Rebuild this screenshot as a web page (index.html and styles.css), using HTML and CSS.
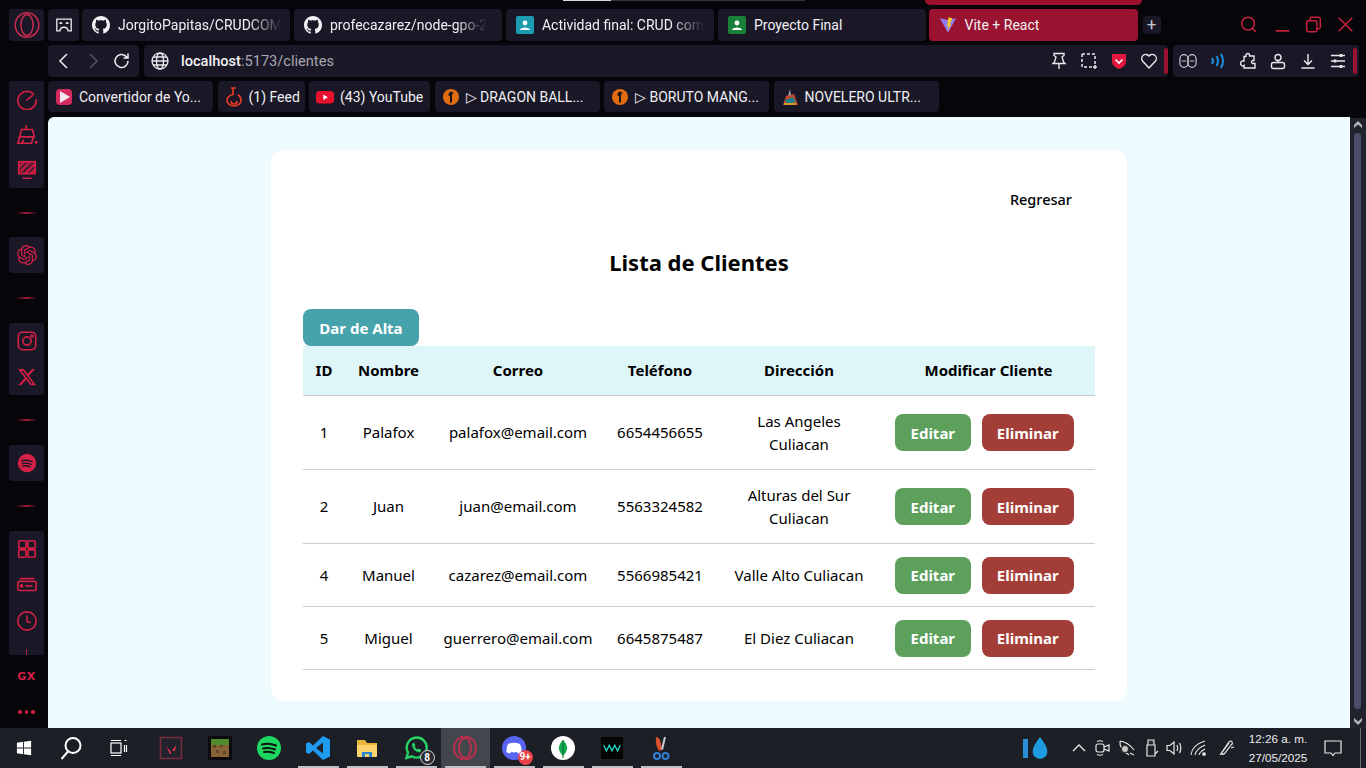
FILE: index.html
```html
<!DOCTYPE html>
<html lang="es">
<head>
<meta charset="utf-8">
<title>Vite + React</title>
<link rel="stylesheet" href="styles.css">
</head>
<body>
<div class="screen">
  <div class="browser">
    <span class="stripe-white"></span>
    <span class="stripe-dark"></span>
    <span class="stripe-red"></span>
    <aside class="sidebar">
      <div class="logo-btn">
        <svg class="i26" viewBox="0 0 32 32" fill="none" stroke="#c92a50" stroke-width="1.800"><ellipse cx="16" cy="16" rx="14.500" ry="15"/><ellipse cx="16" cy="16" rx="7.500" ry="13"/></svg>
      </div>
      <div class="side-group first">
        <div class="side-slot"><svg class="i22" viewBox="0 0 24 24" fill="none" stroke="#d41f47" stroke-width="1.800" stroke-linecap="round"><path d="M19 6.500A10 10 0 1 0 22 13"/><path d="M12 13l6-5"/></svg></div>
        <div class="side-slot"><svg class="i22" viewBox="0 0 24 24" fill="none" stroke="#d41f47" stroke-width="1.800"><path d="M11 1v5M6 6h12l2 8H4z"/><path d="M4 14l-2 7h15l2-7M7 21l1-4"/><circle cx="22" cy="20" r="1.600" fill="#d41f47" stroke="none"/></svg></div>
        <div class="side-slot"><svg class="i22" viewBox="0 0 24 24" fill="none" stroke="#d41f47" stroke-width="1.800"><rect x="3" y="3" width="18" height="13" fill="#d41f47" fill-opacity=".35"/><path d="M5 14L15 3M10 16L21 5M3 9l6-6M16 16l5-5M7 21h10"/></svg></div>
      </div>
      <span class="side-sep"></span>
      <div class="side-group">
        <div class="side-slot"><svg class="i20" viewBox="0 0 24 24"><path fill="#d41f47" d="M22.2819 9.8211a5.9847 5.9847 0 0 0-.5157-4.9108 6.0462 6.0462 0 0 0-6.5098-2.9A6.0651 6.0651 0 0 0 4.9807 4.1818a5.9847 5.9847 0 0 0-3.9977 2.9 6.0462 6.0462 0 0 0 .7427 7.0966 5.98 5.98 0 0 0 .511 4.9107 6.051 6.051 0 0 0 6.5146 2.9001A5.9847 5.9847 0 0 0 13.2599 24a6.0557 6.0557 0 0 0 5.7718-4.2058 5.9894 5.9894 0 0 0 3.9977-2.9001 6.0557 6.0557 0 0 0-.7475-7.0729zm-9.022 12.6081a4.4755 4.4755 0 0 1-2.8764-1.0408l.1419-.0804 4.7783-2.7582a.7948.7948 0 0 0 .3927-.6813v-6.7369l2.02 1.1686a.071.071 0 0 1 .038.052v5.5826a4.504 4.504 0 0 1-4.4945 4.4944zm-9.6607-4.1254a4.4708 4.4708 0 0 1-.5346-3.0137l.142.0852 4.783 2.7582a.7712.7712 0 0 0 .7806 0l5.8428-3.3685v2.3324a.0804.0804 0 0 1-.0332.0615L9.74 19.9502a4.4992 4.4992 0 0 1-6.1408-1.6464zM2.3408 7.8956a4.485 4.485 0 0 1 2.3655-1.9728V11.6a.7664.7664 0 0 0 .3879.6765l5.8144 3.3543-2.0201 1.1685a.0757.0757 0 0 1-.071 0l-4.8303-2.7865A4.504 4.504 0 0 1 2.3408 7.872zm16.5963 3.8558L13.1038 8.364 15.1192 7.2a.0757.0757 0 0 1 .071 0l4.8303 2.7913a4.4944 4.4944 0 0 1-.6765 8.1042v-5.6772a.79.79 0 0 0-.407-.667zm2.0107-3.0231l-.142-.0852-4.7735-2.7818a.7759.7759 0 0 0-.7854 0L9.409 9.2297V6.8974a.0662.0662 0 0 1 .0284-.0615l4.8303-2.7866a4.4992 4.4992 0 0 1 6.6802 4.66zM8.3065 12.863l-2.02-1.1638a.0804.0804 0 0 1-.038-.0567V6.0742a4.4992 4.4992 0 0 1 7.3757-3.4537l-.142.0805L8.704 5.459a.7948.7948 0 0 0-.3927.6813zm1.0976-2.3654l2.602-1.4998 2.6069 1.4998v2.9994l-2.5974 1.4997-2.6067-1.4997Z"/></svg></div>
      </div>
      <span class="side-sep"></span>
      <div class="side-group">
        <div class="side-slot"><svg class="i22" viewBox="0 0 24 24" fill="none" stroke="#d41f47" stroke-width="1.800"><rect x="2.500" y="2.500" width="19" height="19" rx="4.500"/><circle cx="12" cy="12" r="4.500"/><circle cx="17.500" cy="6.500" r="1" fill="#d41f47"/></svg></div>
        <div class="side-slot"><svg class="i20" viewBox="0 0 24 24"><path fill="#d41f47" d="M18.244 2.250h3.308l-7.227 8.260 8.502 11.240H16.170l-5.214-6.817L4.990 21.750H1.680l7.730-8.835L1.254 2.250H8.080l4.713 6.231zm-1.161 17.520h1.833L7.084 4.126H5.117z"/></svg></div>
      </div>
      <span class="side-sep"></span>
      <div class="side-group">
        <div class="side-slot"><svg class="i22" viewBox="0 0 24 24"><circle cx="12" cy="12" r="10" fill="#d41f47"/><path d="M6.500 9.500q6-1.500 11 1M7 12.500q5-1 9.500 1M7.500 15.300q4-.8 8 1" fill="none" stroke="#1a1826" stroke-width="1.500" stroke-linecap="round"/></svg></div>
      </div>
      <span class="side-sep"></span>
      <div class="side-group last">
        <div class="side-slot"><svg class="i22" viewBox="0 0 24 24" fill="none" stroke="#d41f47" stroke-width="1.800"><rect x="3" y="3" width="8" height="8" rx="1"/><rect x="13" y="3" width="8" height="8" rx="1"/><rect x="3" y="13" width="8" height="8" rx="1"/><rect x="13" y="13" width="8" height="8" rx="1"/></svg></div>
        <div class="side-slot"><svg class="i22" viewBox="0 0 24 24" fill="none" stroke="#d41f47" stroke-width="1.800"><path d="M4 5h16"/><rect x="2" y="8" width="20" height="10" rx="2"/><path d="M10 13h8"/><circle cx="6" cy="13" r="1.200" fill="#d41f47"/></svg></div>
        <div class="side-slot"><svg class="i22" viewBox="0 0 24 24" fill="none" stroke="#d41f47" stroke-width="1.800"><circle cx="12" cy="12" r="10"/><path d="M12 6v6.500l4 1.500"/></svg></div>
        <span class="side-tick"></span>
      </div>
      <div class="gx">GX</div>
      <div class="dots"><i></i><i></i><i></i></div>
    </aside>

    <div class="main-col">
      <div class="tabs-row">
        <div class="mini-btn"><svg class="i18" viewBox="0 0 20 20" fill="none" stroke="#e8e8ec" stroke-width="1.500"><path d="M2 3.500h16v13h-3.500q-.5-4-4.500-4t-4.500 4H2z"/><path d="M5 8h3M12 8h3" stroke-width="2"/></svg></div>
        <div class="tab"><svg class="fav18" viewBox="0 0 16 16"><path fill="#f2f2f4" d="M8 0C3.580 0 0 3.580 0 8c0 3.540 2.290 6.530 5.470 7.590.4.07.55-.17.55-.38 0-.19-.01-.82-.01-1.490-2.010.37-2.530-.49-2.690-.94-.09-.23-.48-.94-.82-1.130-.28-.15-.68-.52-.01-.53.63-.01 1.080.58 1.230.82.72 1.210 1.870.87 2.330.66.07-.52.28-.87.51-1.070-1.780-.2-3.640-.89-3.640-3.950 0-.87.31-1.590.82-2.150-.08-.2-.36-1.020.08-2.120 0 0 .67-.21 2.200.82.64-.18 1.320-.27 2-.27.68 0 1.360.09 2 .27 1.530-1.040 2.200-.82 2.200-.82.44 1.100.16 1.920.08 2.120.51.56.82 1.270.82 2.150 0 3.070-1.870 3.750-3.650 3.950.29.25.54.73.54 1.480 0 1.070-.01 1.930-.01 2.200 0 .21.15.46.55.38A8.013 8.013 0 0016 8c0-4.420-3.580-8-8-8z"/></svg><span class="tab-text">JorgitoPapitas/CRUDCOM</span></div>
        <div class="tab"><svg class="fav18" viewBox="0 0 16 16"><path fill="#f2f2f4" d="M8 0C3.580 0 0 3.580 0 8c0 3.540 2.290 6.530 5.470 7.590.4.07.55-.17.55-.38 0-.19-.01-.82-.01-1.490-2.010.37-2.530-.49-2.690-.94-.09-.23-.48-.94-.82-1.130-.28-.15-.68-.52-.01-.53.63-.01 1.080.58 1.230.82.72 1.210 1.870.87 2.330.66.07-.52.28-.87.51-1.070-1.780-.2-3.640-.89-3.640-3.950 0-.87.31-1.590.82-2.150-.08-.2-.36-1.020.08-2.120 0 0 .67-.21 2.200.82.64-.18 1.320-.27 2-.27.68 0 1.360.09 2 .27 1.530-1.040 2.200-.82 2.200-.82.44 1.100.16 1.920.08 2.120.51.56.82 1.270.82 2.150 0 3.070-1.870 3.750-3.650 3.950.29.25.54.73.54 1.480 0 1.070-.01 1.930-.01 2.200 0 .21.15.46.55.38A8.013 8.013 0 0016 8c0-4.420-3.580-8-8-8z"/></svg><span class="tab-text">profecazarez/node-gpo-2</span></div>
        <div class="tab"><svg class="fav18" viewBox="0 0 18 18"><rect width="18" height="18" rx="2" fill="#1a9bb0"/><circle cx="9" cy="7" r="2.400" fill="#fff"/><path d="M4 14c0-3.500 10-3.500 10 0z" fill="#fff"/></svg><span class="tab-text">Actividad final: CRUD com</span></div>
        <div class="tab"><svg class="fav18" viewBox="0 0 18 18"><rect width="18" height="18" rx="2" fill="#188038"/><circle cx="9" cy="7" r="2.400" fill="#fff"/><path d="M4 14c0-3.500 10-3.500 10 0z" fill="#fff"/></svg><span class="tab-text plain">Proyecto Final</span></div>
        <div class="tab active"><svg class="fav18" viewBox="0 0 20 20"><path d="M1 2.500l9 2 9-2-9 16z" fill="#8f7bf0"/><path d="M10.500 1.500l4.500 1-3 7 1.500-.5-4 8 1-6-1.500.5z" fill="#fdc81f"/></svg><span class="tab-text plain">Vite + React</span></div>
        <div class="plus">+</div>
        <div class="win-controls">
          <svg class="i18 win-search" viewBox="0 0 20 20" fill="none" stroke="#c8203f" stroke-width="1.800"><circle cx="9.500" cy="9" r="7.500"/><path d="M14.500 14.500l4 4"/></svg>
          <svg class="i18 win-min" viewBox="0 0 20 20" fill="none" stroke="#c8203f" stroke-width="2"><path d="M2 17.500h16"/></svg>
          <svg class="i18 win-max" viewBox="0 0 20 20" fill="none" stroke="#c8203f" stroke-width="1.800"><rect x="2" y="5.500" width="12" height="13" rx="2"/><path d="M6 5V3.500a2 2 0 0 1 2-2h8a2 2 0 0 1 2 2V13a2 2 0 0 1-2 2h-2"/></svg>
          <svg class="i18 win-close" viewBox="0 0 20 20" fill="none" stroke="#c8203f" stroke-width="1.800"><path d="M2 2l16 16M18 2L2 18"/></svg>
        </div>
      </div>

      <div class="addr-row">
        <div class="nav-group">
          <svg class="i18" viewBox="0 0 18 18" fill="none" stroke="#e8e8ec" stroke-width="1.600"><path d="M12 2L5 9l7 7"/></svg>
          <svg class="i18" viewBox="0 0 18 18" fill="none" stroke="#55545e" stroke-width="1.600"><path d="M6 2l7 7-7 7"/></svg>
          <svg class="i18" viewBox="0 0 18 18" fill="none" stroke="#e8e8ec" stroke-width="1.600"><path d="M15 9a6.500 6.500 0 1 1-2-4.700L15 6M15 1.500V6h-4.500"/></svg>
        </div>
        <div class="url-bar">
          <svg class="i18" viewBox="0 0 18 18" fill="none" stroke="#e8e8ec" stroke-width="1.300"><circle cx="9" cy="9" r="8"/><ellipse cx="9" cy="9" rx="3.500" ry="8"/><path d="M1 9h16M2 5h14M2 13h14"/></svg>
          <span class="url"><b>localhost</b>:5173/clientes</span>
          <div class="url-icons">
            <svg class="i18" viewBox="0 0 18 18" fill="none" stroke="#e8e8ec" stroke-width="1.400"><path d="M4 1.500h10v2l-2 1.500 1.500 5 1.500 1.500H3l1.500-1.500 1.500-5L4 3.500zM9 11.500V17"/></svg>
            <svg class="i18" viewBox="0 0 18 18" fill="none" stroke="#e8e8ec" stroke-width="1.500" stroke-dasharray="3 2"><path d="M2 2h13v10M2 2v13h10"/><path d="M15 13v4M13 15h4" stroke-dasharray="none"/></svg>
            <svg class="i18" viewBox="0 0 18 18"><path d="M2 2h14v7c0 4-3 6.500-7 8-4-1.500-7-4-7-8z" fill="#e4173e"/><path d="M5.500 7.500L9 11l3.500-3.500" fill="none" stroke="#fff" stroke-width="1.600"/></svg>
            <svg class="i18" viewBox="0 0 18 18" fill="none" stroke="#e8e8ec" stroke-width="1.400"><path d="M9 16L2.500 9a4 4 0 0 1 6.500-5 4 4 0 0 1 6.500 5z"/></svg>
          </div>
          <span class="red-bar"></span>
        </div>
        <div class="ext-group">
          <svg class="i18" viewBox="0 0 20 18" fill="none" stroke="#c9c9d0" stroke-width="1.300"><rect x="1" y="2" width="9" height="14" rx="4.500"/><rect x="10" y="2" width="9" height="14" rx="4.500"/><path d="M3 9h5M12 9h5"/></svg>
          <svg class="i18" viewBox="0 0 18 18" fill="none" stroke="#1a8fe0" stroke-width="2"><path d="M3 6q2 3 0 6M7.500 4q3 5 0 10M12 2q4 7 0 14"/></svg>
          <svg class="i18" viewBox="0 0 18 18" fill="none" stroke="#e8e8ec" stroke-width="1.400"><path d="M7 2.500q2-2 3.500 0v1.500H15v4.500h-1.500q-2 1.500 0 3H16V16H5v-2.500q-1 1-2.500 0t-.5-3.500q1-1.500 3-1V4.500h2z"/></svg>
          <svg class="i18" viewBox="0 0 18 18" fill="none" stroke="#e8e8ec" stroke-width="1.400"><circle cx="9" cy="5.500" r="3"/><path d="M9 8.500v2"/><rect x="2.500" y="10.500" width="13" height="6" rx="2"/></svg>
          <svg class="i18" viewBox="0 0 18 18" fill="none" stroke="#e8e8ec" stroke-width="1.400"><path d="M9 2v10M5 8.500L9 12.500 13 8.500M2.500 16h13"/></svg>
          <svg class="i18" viewBox="0 0 18 18" fill="none" stroke="#e8e8ec" stroke-width="1.500"><path d="M2 3.500h14M2 9h14M2 14.500h14"/><path d="M12 2v3M6 7.500v3M12 13v3" stroke-width="2.500"/></svg>
          <span class="red-bar end"></span>
        </div>
      </div>

      <div class="marks-row">
        <div class="mark m1"><svg class="fav18" viewBox="0 0 18 18"><rect x="1" y="1" width="16" height="16" rx="4" fill="#d42a5e"/><path d="M5 3l10 6-10 6z" fill="#f4e8f0"/></svg><span>Convertidor de Yo...</span></div>
        <div class="mark m2"><svg class="fav20" viewBox="0 0 20 20" fill="none" stroke="#e23a27" stroke-width="1.700"><path d="M9 1v6.500Q3 9 3 13.500a7 5.500 0 0 0 14 0Q17 10 14 7.500"/><path d="M7 1h5M7 14a3 3 0 0 0 6 0"/></svg><span>(1) Feed</span></div>
        <div class="mark m3"><svg class="fav18" viewBox="0 0 18 18"><rect y="3" width="18" height="12.500" rx="3.500" fill="#e8112d"/><path d="M7.300 6.500l4.500 2.700-4.500 2.700z" fill="#fff"/></svg><span>(43) YouTube</span></div>
        <div class="mark m4"><svg class="fav18" viewBox="0 0 18 18"><circle cx="9" cy="9" r="8" fill="#e26c10"/><path d="M9 3.500c-2 1-3 2-2.500 4l1.500.5v6.500h2V6.500l1.500-1.500q-1-1.500-2.500-1.500z" fill="#17151e"/></svg><span>▷ DRAGON BALL...</span></div>
        <div class="mark m4"><svg class="fav18" viewBox="0 0 18 18"><circle cx="9" cy="9" r="8" fill="#e26c10"/><path d="M9 3.500c-2 1-3 2-2.500 4l1.500.5v6.500h2V6.500l1.500-1.500q-1-1.500-2.500-1.500z" fill="#17151e"/></svg><span>▷ BORUTO MANG...</span></div>
        <div class="mark m6"><svg class="fav18" viewBox="0 0 18 18"><path d="M2 17l3-9 8-2 4 11z" fill="#c3492a"/><path d="M4 12l8-3 3 5-9 2z" fill="#1f7f8c"/><path d="M9 1l1 6-3 1z" fill="#9aa0a8"/><path d="M3 15h12v2H3z" fill="#d59a2a"/></svg><span>NOVELERO ULTR...</span></div>
      </div>

      <div class="viewport">
        <main class="page">
          <section class="card">
            <div class="back-row"><a class="back">Regresar</a></div>
            <h1>Lista de Clientes</h1>
            <button class="btn add">Dar de Alta</button>
            <table>
              <colgroup><col class="c-id"><col class="c-name"><col class="c-mail"><col class="c-tel"><col class="c-dir"><col class="c-mod"></colgroup>
              <thead><tr><th>ID</th><th>Nombre</th><th>Correo</th><th>Teléfono</th><th>Dirección</th><th>Modificar Cliente</th></tr></thead>
              <tbody>
                <tr><td>1</td><td>Palafox</td><td>palafox@email.com</td><td>6654456655</td><td>Las Angeles Culiacan</td><td><div class="actions"><button class="btn edit">Editar</button><button class="btn del">Eliminar</button></div></td></tr>
                <tr><td>2</td><td>Juan</td><td>juan@email.com</td><td>5563324582</td><td>Alturas del Sur Culiacan</td><td><div class="actions"><button class="btn edit">Editar</button><button class="btn del">Eliminar</button></div></td></tr>
                <tr><td>4</td><td>Manuel</td><td>cazarez@email.com</td><td>5566985421</td><td>Valle Alto Culiacan</td><td><div class="actions"><button class="btn edit">Editar</button><button class="btn del">Eliminar</button></div></td></tr>
                <tr><td>5</td><td>Miguel</td><td>guerrero@email.com</td><td>6645875487</td><td>El Diez Culiacan</td><td><div class="actions"><button class="btn edit">Editar</button><button class="btn del">Eliminar</button></div></td></tr>
              </tbody>
            </table>
          </section>
        </main>
        <div class="scrollbar">
          <svg class="sb-up" viewBox="0 0 8 7" fill="#b4b4bc"><path d="M4 0l4 4v3L4 3.500 0 7V4z"/></svg>
          <span class="sb-thumb"></span>
          <svg class="sb-down" viewBox="0 0 8 7" fill="#b4b4bc"><path d="M4 7L0 3V0l4 3.500L8 0v3z"/></svg>
        </div>
      </div>
    </div>
  </div>

  <footer class="taskbar">
    <div class="tb-start"><svg class="i16" viewBox="0 0 18 18" fill="#fff"><path d="M1 3l7-1v6.500H1zM9 2l8-1.200v7.700H9zM1 9.500h7V16l-7-1zM9 9.500h8v7.700L9 16z"/></svg></div>
    <div class="tb-start"><svg class="i24" viewBox="0 0 24 24" fill="none" stroke="#fff" stroke-width="2"><circle cx="14" cy="9.500" r="7.500"/><path d="M9 15.500L2.500 23"/></svg></div>
    <div class="tb-start"><svg class="i18" viewBox="0 0 18 18" fill="none" stroke="#fff" stroke-width="1.200"><rect x="1" y="4" width="10" height="10"/><path d="M1 1.500h10M1 16.500h10M14.500 1.500h2M14.500 6v7M16.500 6v7" /></svg></div>
    <div class="tb-gap"></div>
    <div class="tb-app"><svg class="i24" viewBox="0 0 24 24"><rect x="1.500" y="1.500" width="21" height="21" fill="#20232b" stroke="#7a2b3c" stroke-width="1.500"/><path d="M7 10l5 6v2h-1zM17 9l-4 6h3z" fill="#e8334d"/></svg></div>
    <div class="tb-app"><svg class="i24" viewBox="0 0 24 24"><rect width="24" height="24" fill="#0b0b0b"/><rect x="3" y="3" width="18" height="6" fill="#4f8a2c"/><rect x="3" y="9" width="18" height="12" fill="#8a6237"/><path d="M5 9h3v3H5zM12 9h3v2h-3zM8 14h3v3H8zM15 15h3v3h-3z" fill="#5f4527"/></svg></div>
    <div class="tb-app"><svg class="i24" viewBox="0 0 24 24"><circle cx="12" cy="12" r="12" fill="#1ed760"/><path d="M5 8.500q7-2 14 1M6 12.500q6-1.500 12 1M7 16q5-1 10 1" fill="none" stroke="#111" stroke-width="2" stroke-linecap="round"/></svg></div>
    <div class="tb-app"><svg class="i24" viewBox="0 0 24 24"><path d="M17 0l7 3.500v17L17 24 7 14.500l-4 3.500-3-1.500v-9L3 6l4 3.500z" fill="#1f9cf0"/><path d="M17 6.500L10 12l7 5.500z" fill="#20232b"/></svg></div>
    <div class="tb-app"><svg class="i24" viewBox="0 0 24 24"><path d="M2 4h8l2 3h10v5H2z" fill="#e8b43a"/><path d="M2 9h20v11a1 1 0 0 1-1 1H3a1 1 0 0 1-1-1z" fill="#fbd56b"/><path d="M7 16h10v5H7z" fill="#2c85d0"/><path d="M10 18h4v3h-4z" fill="#fbd56b"/></svg></div>
    <div class="tb-app"><svg class="i24" viewBox="0 0 24 24" fill="none" stroke="#25d366" stroke-width="2.400"><path d="M2.500 22l1.500-5.500a10 10 0 1 1 3.800 3.800z"/><path d="M8 8q0 7 8 8.500l1.500-2.500-3-1.500-1 1q-2-1-3-3l1-1-1.500-3z" fill="#25d366" stroke="none"/></svg><span class="wa-badge">8</span></div>
    <div class="tb-app active-app"><svg class="i24" viewBox="0 0 24 24" fill="none" stroke="#b8304f" stroke-width="2"><ellipse cx="12" cy="12" rx="11" ry="11.500"/><ellipse cx="12" cy="12" rx="6" ry="10"/></svg></div>
    <div class="tb-app"><svg class="i24" viewBox="0 0 24 24"><circle cx="12" cy="12" r="12" fill="#5865f2"/><path d="M6 8q6-2.500 12 0 2 4 1.500 8-2 1.500-3.500 1.500l-1-1.500q-3 .8-6 0L8 17.500Q6 17 4.500 16 4 12 6 8z" fill="#fff"/></svg><span class="dc-badge">9+</span></div>
    <div class="tb-app"><svg class="i24" viewBox="0 0 24 24"><circle cx="12" cy="12" r="12" fill="#fff"/><path d="M12 4q5 5 4 10-1 3-4 6-3-3-4-6-1-5 4-10z" fill="#13aa52"/><path d="M12 4v18" stroke="#0c6b34" stroke-width="1"/></svg></div>
    <div class="tb-app"><svg class="i22" viewBox="0 0 24 24"><rect width="24" height="24" fill="#050505"/><path d="M3 9l3 6 3-6 3 6 3-6 3 6 3-6" fill="none" stroke="#2ad5c4" stroke-width="1.500"/></svg></div>
    <div class="tb-app"><svg class="i24" viewBox="0 0 24 24" fill="none"><path d="M7 1q4 0 5 7l1 6-3 1Q6 9 7 1z" fill="#d8502c"/><path d="M17 1l-3 13-2-1 3-12z" fill="#c9c9cf"/><circle cx="8" cy="20" r="3" stroke="#2f7fd6" stroke-width="2"/><circle cx="16.500" cy="20" r="3" stroke="#2f7fd6" stroke-width="2"/></svg></div>
    <div class="tray">
      <div class="drop"><span class="drop-bar"></span><svg class="drop-svg" viewBox="0 0 16 24"><path d="M8 0q8 10 8 16a8 8 0 0 1-16 0Q0 10 8 0z" fill="#1c9bdd"/></svg></div>
      <svg class="i14 t-caret" viewBox="0 0 14 14" fill="none" stroke="#e8e8e8" stroke-width="1.300"><path d="M1 10l6-6 6 6"/></svg>
      <svg class="i18 t-icon" viewBox="0 0 18 18" fill="none" stroke="#e8e8e8" stroke-width="1.200"><rect x="2" y="5" width="8" height="8" rx="2"/><path d="M10 8l5-2v6l-5-2M3 2.500q3-1.500 6 0M3 15.500q3 1.500 6 0"/></svg>
      <svg class="i18 t-icon" viewBox="0 0 18 18" fill="none" stroke="#e8e8e8" stroke-width="1.200"><path d="M2 2q8 1 14 9M2 2q-1 8 9 14"/><circle cx="7" cy="10" r="3.500" fill="#c9c9c9" stroke="#333"/><path d="M12 14l4 2"/></svg>
      <svg class="i18 t-icon" viewBox="0 0 18 18" fill="none" stroke="#e8e8e8" stroke-width="1.200"><path d="M6 1h6v5H6zM5 6h8v11H5z"/><path d="M8 3h.5M10 3h.5M13 15l3-3"/></svg>
      <svg class="i18 t-icon" viewBox="0 0 18 18" fill="none" stroke="#e8e8e8" stroke-width="1.200"><path d="M1 6.500h3l4-3.500v12l-4-3.500H1zM11 6q1.500 3 0 6M13.500 4q2.500 5 0 10"/></svg>
      <svg class="i18 t-icon" viewBox="0 0 18 18" fill="none" stroke="#e8e8e8" stroke-width="1.100"><path d="M1 16q1-10 14-14M5 16q1-6 10-10M9 16q.5-3 6-6"/><circle cx="14" cy="15" r="1.300" fill="#e8e8e8"/></svg>
      <svg class="i18 t-icon t-pen" viewBox="0 0 18 18" fill="none" stroke="#e8e8e8" stroke-width="1.200"><path d="M3 16L12 3q2-2 3 0t-1 3L8 14q-2 2-3 1t1-3l6-8M14 9l3-1"/></svg>
      <div class="clock"><span>12:26 a. m.</span><span>27/05/2025</span></div>
      <svg class="i18 t-note" viewBox="0 0 18 18" fill="none" stroke="#e8e8e8" stroke-width="1.200"><path d="M1 2h16v12H11l-2 2.500L7 14H1z"/></svg>
      <span class="t-end"></span>
    </div>
  </footer>
</div>
</body>
</html>
```
FILE: styles.css
```css
* { box-sizing: border-box; margin: 0; padding: 0; }
html, body { width: 1366px; height: 768px; overflow: hidden; }
body { background: #06050a; font-family: Roboto, "Liberation Sans", sans-serif; }
svg { display: block; flex: none; }
.i14 { width: 14px; height: 14px; }
.i16 { width: 16px; height: 16px; }
.i18 { width: 18px; height: 18px; }
.i20 { width: 20px; height: 20px; }
.i22 { width: 22px; height: 22px; }
.i24 { width: 24px; height: 24px; }
.i26 { width: 26px; height: 26px; }
.fav18 { width: 18px; height: 18px; flex: none; }
.fav20 { width: 20px; height: 20px; flex: none; }

.screen { width: 1366px; height: 768px; display: flex; flex-direction: column; }
.browser { position: relative; height: 728px; display: flex; background: #06050a; }
.stripe-white { position: absolute; left: 563px; top: 0; width: 48px; height: 1px; background: #d8d8dc; }
.stripe-dark { position: absolute; left: 611px; top: 0; width: 194px; height: 1px; background: #34343a; }
.stripe-red { position: absolute; left: 925px; top: 0; width: 217px; height: 5px; background: #9b1231; border-radius: 0 0 8px 8px; }

/* sidebar */
.sidebar { width: 48px; flex: none; padding: 9px 0 0 9px; display: flex; flex-direction: column; }
.logo-btn { width: 35px; height: 32px; background: #1a1826; border-radius: 4px; display: flex; align-items: center; justify-content: center; }
.side-group { width: 35px; background: #1a1826; border-radius: 3px; display: flex; flex-direction: column; }
.side-group.first { margin-top: 40px; height: 107px; }
.side-slot { height: 36px; display: flex; align-items: center; justify-content: center; }
.side-sep { height: 2px; width: 21px; margin: 24px 0 24px 7px; background: linear-gradient(90deg, transparent, #a51c3c, transparent); flex: none; }
.first + .side-sep { margin-bottom: 23px; }
.side-group.last { height: 124px; position: relative; }
.side-tick { position: absolute; left: 17px; bottom: 0; width: 1px; height: 6px; background: #a51c3c; }
.gx { height: 42px; width: 35px; display: flex; align-items: center; justify-content: center; color: #d41f47; font: 700 11px "DejaVu Sans", sans-serif; letter-spacing: .5px; }
.dots { width: 35px; height: 30px; display: flex; gap: 3px; align-items: center; justify-content: center; }
.dots i { width: 3.500px; height: 3.500px; border-radius: 50%; background: #d41f47; }

/* chrome */
.main-col { flex: 1; min-width: 0; display: flex; flex-direction: column; padding-top: 9px; }
.tabs-row { height: 32px; display: flex; align-items: center; gap: 4.400px; flex: none; }
.mini-btn { width: 31px; height: 32px; background: #1a1826; border-radius: 4px; display: flex; align-items: center; justify-content: center; margin-right: -1.400px; }
.tab { width: 207.600px; height: 32px; background: #1a1826; border-radius: 4px; display: flex; align-items: center; gap: 8px; padding-left: 10px; overflow: hidden; color: #f0f0f3; font-size: 14px; white-space: nowrap; }
.tab.active { background: #9b1231; width: 209px; margin-left: -1.400px; }
.tab-text { flex: none; -webkit-mask-image: linear-gradient(90deg, #000 80%, transparent 100%); mask-image: linear-gradient(90deg, #000 80%, transparent 100%); }
.tab-text.plain { -webkit-mask-image: none; mask-image: none; }
.plus { width: 18px; height: 18px; background: #1a1826; border-radius: 4px; color: #c9c9d0; font-size: 17px; line-height: 17px; text-align: center; margin-left: .600px; }
.win-controls { position: relative; flex: 1; align-self: stretch; }
.win-controls svg { position: absolute; top: 7px; width: 17px; height: 17px; }
.win-search { left: 75px; }
.win-min { left: 109px; }
.win-max { left: 140px; }
.win-close { left: 172px; }

.addr-row { height: 32px; margin-top: 4px; display: flex; gap: 5px; flex: none; }
.nav-group { width: 91px; background: #1a1826; border-radius: 4px; display: flex; align-items: center; gap: 11px; padding-left: 7px; }
.url-bar { width: 1024px; background: #1a1826; border-radius: 4px; display: flex; align-items: center; padding-left: 7px; position: relative; }
.url { margin-left: 12px; color: #a9a8b2; font-size: 14.600px; }
.url b { font-weight: 500; color: #f2f2f4; }
.url-icons { margin-left: auto; margin-right: 6px; display: flex; gap: 12px; }
.red-bar { width: 4px; height: 26px; background: #9b1231; border-radius: 2px; }
.ext-group { width: 186px; background: #1a1826; border-radius: 4px; display: flex; align-items: center; gap: 12px; padding-left: 5.500px; position: relative; }
.red-bar.end { position: absolute; right: 2px; top: 3px; }

.marks-row { height: 31px; margin-top: 4px; display: flex; gap: 4.500px; flex: none; }
.mark { height: 31px; background: #1a1826; border-radius: 4px; display: flex; align-items: center; gap: 6px; padding-left: 7px; color: #f0f0f3; font-size: 14px; white-space: nowrap; overflow: hidden; }
.m1 { width: 165px; }
.m2 { width: 87px; }
.m3 { width: 121px; }
.m4 { width: 165px; }
.m6 { width: 165px; }
.m2 { gap: 5px; padding-left: 6px; }

/* viewport */
.viewport { margin-top: 5px; height: 611px; display: flex; flex: none; }
.page { width: 1302px; height: 611px; background: #edfbfe; border-top-left-radius: 6px; padding: 33px 0 0 223px; font-family: "Noto Sans", "Open Sans", sans-serif; }
.card { width: 856px; height: 551px; background: #fff; border-radius: 12px; padding: 32px; color: #000; }
.back-row { display: flex; justify-content: flex-end; height: 34px; padding-right: 23px; align-items: center; }
.back { font-size: 14.500px; color: #000; font-weight: 500; }
h1 { font-size: 22px; font-weight: 700; text-align: center; line-height: 32px; margin-top: 30px; margin-bottom: 31px; }
.btn { border: 0; border-radius: 8px; color: #fff; font-family: inherit; font-size: 15px; font-weight: 700; height: 37px; display: block; }
.add { width: 116px; background: #46a2ab; }
table { width: 792px; border-collapse: collapse; table-layout: fixed; font-size: 15px; line-height: 23px; }
.c-id { width: 42px; }
.c-name { width: 87px; }
.c-mail { width: 172px; }
.c-tel { width: 112px; }
.c-dir { width: 166px; }
.c-mod { width: 213px; }
th, td { padding: 12.500px 12.800px; text-align: center; border-bottom: 1px solid #ccc; }
th { background: #dff6f9; font-weight: 700; padding: 13px 0; }
td { font-weight: 400; }
td:nth-child(-n+4) { padding-left: 0; padding-right: 0; }
td:nth-child(5) { padding-top: 13.500px; padding-bottom: 13.500px; }
.actions { display: flex; gap: 11px; }
.edit { width: 76px; background: #5ca05c; }
.del { width: 92px; background: #a33d38; }

.scrollbar { width: 16px; height: 611px; margin-top: 1px; background: #20222e; position: relative; }
.sb-up, .sb-down { position: absolute; left: 4px; width: 8px; height: 7px; }
.sb-up { top: 3px; }
.sb-down { bottom: 4px; }
.sb-thumb { position: absolute; top: 15px; bottom: 20px; left: 4px; width: 7px; background: #4b4c68; border-radius: 4px; }

/* taskbar */
.taskbar { height: 40px; background: #1c1f26; display: flex; align-items: center; flex: none; }
.tb-start { width: 47.500px; height: 40px; display: flex; align-items: center; justify-content: center; }
.tb-gap { width: 4px; }
.tb-app { width: 49px; height: 40px; position: relative; display: flex; align-items: center; justify-content: center; }
.tb-app:nth-of-type(n+8)::after { content: ""; position: absolute; left: 4px; right: 4px; bottom: 0; height: 2px; background: #bfc1c5; }
.active-app { background: #43464c; }
.wa-badge, .dc-badge { position: absolute; font-size: 10px; font-weight: 700; color: #fff; border-radius: 50%; width: 15px; height: 15px; line-height: 14px; text-align: center; right: 6px; bottom: 3px; }
.wa-badge { background: #2a2c30; border: 1px solid #ddd; }
.dc-badge { background: #e8434b; }
.tray { position: relative; margin-left: auto; height: 40px; display: flex; align-items: center; color: #eee; width: 346px; }
.drop { width: 25px; height: 24px; margin-left: 3px; display: flex; justify-content: space-between; align-items: center; }
.drop-bar { width: 5px; height: 19px; background: #2a8fd8; }
.drop-svg { width: 16px; height: 22px; }
.t-caret { margin-left: 24px; }
.t-icon { margin-left: 6px; }
.t-caret + .t-icon { margin-left: 8px; }
.t-pen { margin-left: 9px; }
.clock { margin-left: 13px; width: 60px; display: flex; flex-direction: column; align-items: center; font: 11.700px/19px "Liberation Sans", sans-serif; white-space: nowrap; }
.t-note { margin-left: 16px; }
.t-end { position: absolute; right: 5px; top: 0; bottom: 0; width: 1px; background: #6a6c72; }
```
